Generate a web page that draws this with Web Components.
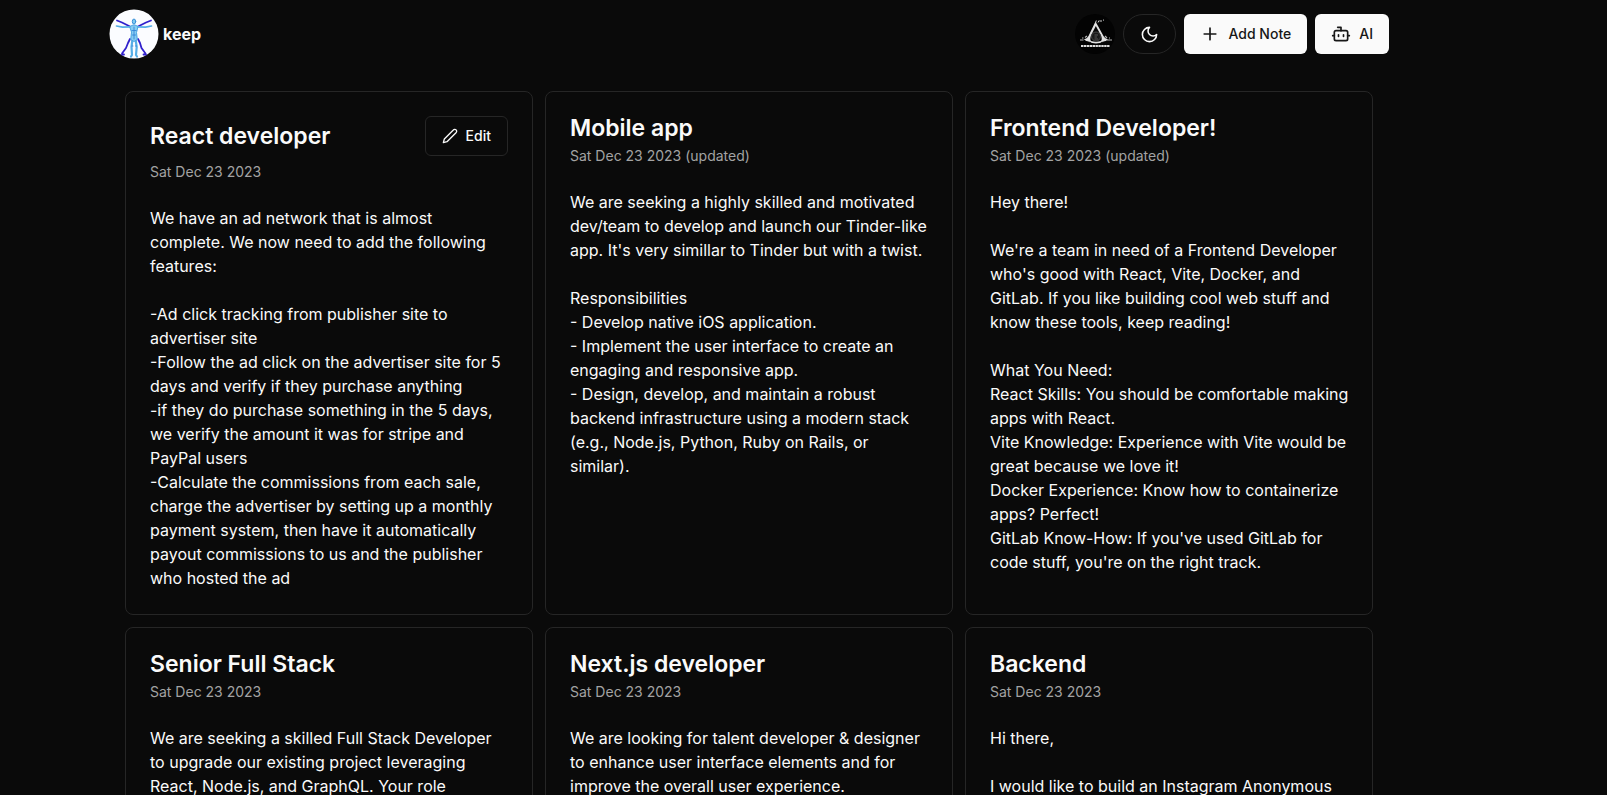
<!DOCTYPE html>
<html lang="en">
<head>
<meta charset="utf-8">
<title>keep</title>
<style>
  html { background: #0a0a0a; overflow: hidden; }
  body { margin: 0; background: #0a0a0a; color: #fafafa; font: 400 16px/24px Inter, sans-serif; }
</style>
</head>
<body>
<keep-app>
  <keep-header slot="header"></keep-header>
  <note-card heading="React developer" date="Sat Dec 23 2023" editable>We have an ad network that is almost complete. We now need to add the following features:

-Ad click tracking from publisher site to advertiser site
-Follow the ad click on the advertiser site for 5 days and verify if they purchase anything
-if they do purchase something in the 5 days, we verify the amount it was for stripe and PayPal users
-Calculate the commissions from each sale, charge the advertiser by setting up a monthly payment system, then have it automatically payout commissions to us and the publisher who hosted the ad</note-card>
  <note-card heading="Mobile app" date="Sat Dec 23 2023 (updated)">We are seeking a highly skilled and motivated dev/team to develop and launch our Tinder-like app. It's very simillar to Tinder but with a twist.

Responsibilities
- Develop native iOS application.
- Implement the user interface to create an engaging and responsive app.
- Design, develop, and maintain a robust backend infrastructure using a modern stack (e.g., Node.js, Python, Ruby on Rails, or similar).</note-card>
  <note-card heading="Frontend Developer!" date="Sat Dec 23 2023 (updated)">Hey there!

We're a team in need of a Frontend Developer who's good with React, Vite, Docker, and GitLab. If you like building cool web stuff and know these tools, keep reading!

What You Need:
React Skills: You should be comfortable making apps with React.
Vite Knowledge: Experience with Vite would be great because we love it!
Docker Experience: Know how to containerize apps? Perfect!
GitLab Know-How: If you've used GitLab for code stuff, you're on the right track.</note-card>
  <note-card heading="Senior Full Stack" date="Sat Dec 23 2023">We are seeking a skilled Full Stack Developer to upgrade our existing project leveraging React, Node.js, and GraphQL. Your role</note-card>
  <note-card heading="Next.js developer" date="Sat Dec 23 2023">We are looking for talent developer &amp; designer to enhance user interface elements and for improve the overall user experience.</note-card>
  <note-card heading="Backend" date="Sat Dec 23 2023">Hi there,

I would like to build an Instagram Anonymous</note-card>
</keep-app>

<script>
const define = (name, html, setup) => {
  const tpl = document.createElement('template');
  tpl.innerHTML = html;
  customElements.define(name, class extends HTMLElement {
    constructor() {
      super();
      this.attachShadow({ mode: 'open' }).append(tpl.content.cloneNode(true));
    }
    connectedCallback() { if (setup) setup(this, this.shadowRoot); }
  });
};

define('keep-app', `
  <style>
    :host { display: block; padding-right: 109px; }
    .wrap { max-width: 1280px; margin: 0 auto; }
    main { display: grid; grid-template-columns: repeat(3, minmax(0, 1fr)); gap: 12px; padding: 23px 16px 16px; }
  </style>
  <div class="wrap">
    <slot name="header"></slot>
    <main><slot></slot></main>
  </div>`);

/* Stroke icons on a 24-unit grid */
const ICONS = {
  plus: '<path d="M5 12h14M12 5v14"/>',
  bot: '<path d="M12 8V4H8"/><rect width="16" height="12" x="4" y="8" rx="2"/><path d="M2 14h2M20 14h2M15 13v2M9 13v2"/>',
  moon: '<path d="M12 3a6 6 0 0 0 9 9 9 9 0 1 1-9-9Z"/>',
  pencil: '<path d="M17 3a2.85 2.83 0 1 1 4 4L7.5 20.5 2 22l1.5-5.5Z"/>'
};
define('keep-icon', `
  <style>
    :host { display: block; flex: none; width: 20px; height: 20px; }
    svg { display: block; width: 100%; height: 100%; }
  </style>
  <svg viewBox="0 0 24 24" fill="none" stroke="currentColor" stroke-width="2" stroke-linecap="round" stroke-linejoin="round" aria-hidden="true"></svg>`,
  (el, root) => { root.querySelector('svg').innerHTML = ICONS[el.getAttribute('name')]; });

define('keep-button', `
  <style>
    :host { display: block; flex: none; }
    button {
      display: flex; align-items: center; gap: 8px; height: 40px; padding: 0 16px;
      border: 0; border-radius: 6px; background: #fafafa; color: #171717;
      font: 500 14px/20px Inter, sans-serif; cursor: pointer;
    }
    :host([variant="outline"]) button, :host([variant="round"]) button {
      border: 1px solid #262626; background: #0a0a0a; color: #fafafa;
    }
    :host([variant="round"]) button { border-radius: 20px; }
  </style>
  <button type="button"><slot></slot></button>`,
  (el, root) => {
    if (el.hasAttribute('label')) root.querySelector('button').setAttribute('aria-label', el.getAttribute('label'));
  });

define('keep-logo', `
  <style>
    :host { display: block; }
    a { display: flex; align-items: center; gap: 4px; color: #fafafa; text-decoration: none; font-weight: 700; }
    svg { display: block; width: 50px; height: 50px; }
  </style>
  <a href="#">
    <svg viewBox="0 0 50 50" fill="none" stroke-linecap="round" stroke-linejoin="round" aria-hidden="true">
      <circle cx="25" cy="25" r="24.5" fill="#fbfcff"/>
      <g stroke="#3020cc" stroke-width="1.8">
        <path d="M8 11.500l5 2 8 4M42 11.500l-5 2-8 4"/>
        <path d="M21 30l-2 4-2 5-4 5.500M29 30l2 4 1.500 5 4 5.500M13 45.500h2M37 45.500h-2.500"/>
      </g>
      <g stroke="#56aee6" stroke-width="1.700">
        <path d="M7.500 17l6 1.200 8-.4M42.500 17l-6 1.200-8-.4"/>
        <path d="M23.500 30l-1 8 .5 8-1 1.500M26.500 30l1.200 8-.7 8 1 1.500" stroke-width="2.200"/>
      </g>
      <path d="M21 17.500l3-1.500h2l3 1.500-1.500 6 .8 7-3.300 2-3.300-2 .8-7z" fill="#86cdf2" stroke="#4aa5e2" stroke-width="1"/>
      <path d="M25 18v12M23 21.500h4M23.500 26h3M23 37h1M26.500 37h1" stroke="#2f7fd6" stroke-width=".8"/>
      <ellipse cx="25" cy="12.500" rx="1.700" ry="2.500" fill="#7ccbf0" stroke="#3a90d8" stroke-width="1"/>
    </svg>
    <span>keep</span>
  </a>`);

define('keep-avatar', `
  <style>
    :host { display: block; flex: none; }
    button { display: block; width: 40px; height: 40px; padding: 0; border: 0; border-radius: 50%; overflow: hidden; background: #030303; cursor: pointer; }
    svg { display: block; width: 40px; height: 40px; }
  </style>
  <button type="button" aria-label="Account">
    <svg viewBox="0 0 40 40" fill="none" aria-hidden="true">
      <path d="M20.500 7.500L13.500 22q-1.500 3-4.500 3.500 4 3 12 4 8-1 12-4-3-.5-4.500-3.500z" fill="#e2e2e2"/>
      <path d="M20.800 12L16 21.500q-1.500 4 0 5.500 5 1.500 10 0 1.500-1.500 0-5.500z" fill="#060606"/>
      <circle cx="21" cy="22.500" r="4.500" fill="#1a1a1a" stroke="#484848"/>
      <path d="M19.500 21h3.500M19.500 23h2.500M19.500 25h3.500" stroke="#666" stroke-width=".8"/>
      <path d="M20.500 9l.8-2.500M23 8.500l1-2M24.500 7h2.500M28 6.500l1-.8" stroke="#ccc"/>
      <path d="M5 26h3.500M32 26h5M7 24h1.500M34 24h1M12 22l-2 1.500M30 22l2 2" stroke="#b5b5b5" stroke-width="1.200"/>
      <path d="M10 27.500l6 1M26 28.500l6-1" stroke="#060606" stroke-width=".8"/>
      <path d="M6 32h29" stroke="#dedede" stroke-width="1.800" stroke-dasharray="2.400 .5"/>
    </svg>
  </button>`);

define('keep-header', `
  <style>
    :host { display: block; }
    header { display: flex; align-items: center; justify-content: space-between; height: 68px; }
    nav { display: flex; align-items: center; gap: 8px; }
    .moon { width: 19px; height: 19px; }
  </style>
  <header>
    <keep-logo></keep-logo>
    <nav>
      <keep-avatar></keep-avatar>
      <keep-button variant="round" label="Toggle theme"><keep-icon class="moon" name="moon"></keep-icon></keep-button>
      <keep-button><keep-icon name="plus"></keep-icon>Add Note</keep-button>
      <keep-button><keep-icon name="bot"></keep-icon>AI</keep-button>
    </nav>
  </header>`);

define('note-card', `
  <style>
    :host { display: block; box-sizing: border-box; padding: 24px; border: 1px solid #262626; border-radius: 8px; background: #0a0a0a; }
    .top { display: flex; align-items: center; justify-content: space-between; }
    h3 { margin: 0; font-size: 23px; line-height: 24px; font-weight: 600; }
    .date { margin: 6px 0 24px; font-size: 14px; line-height: 20px; color: #a3a3a3; }
    .body { margin: 0 -1px 0 0; white-space: pre-line; }
    .pen { width: 16px; height: 16px; }
  </style>
  <div class="top"><h3></h3></div>
  <p class="date"></p>
  <p class="body"><slot></slot></p>`,
  (el, root) => {
    root.querySelector('h3').textContent = el.getAttribute('heading');
    root.querySelector('.date').textContent = el.getAttribute('date');
    if (el.hasAttribute('editable') && !root.querySelector('keep-button')) {
      root.querySelector('.top').insertAdjacentHTML('beforeend',
        '<keep-button variant="outline"><keep-icon class="pen" name="pencil"></keep-icon>Edit</keep-button>');
    }
  });
</script>
</body>
</html>
